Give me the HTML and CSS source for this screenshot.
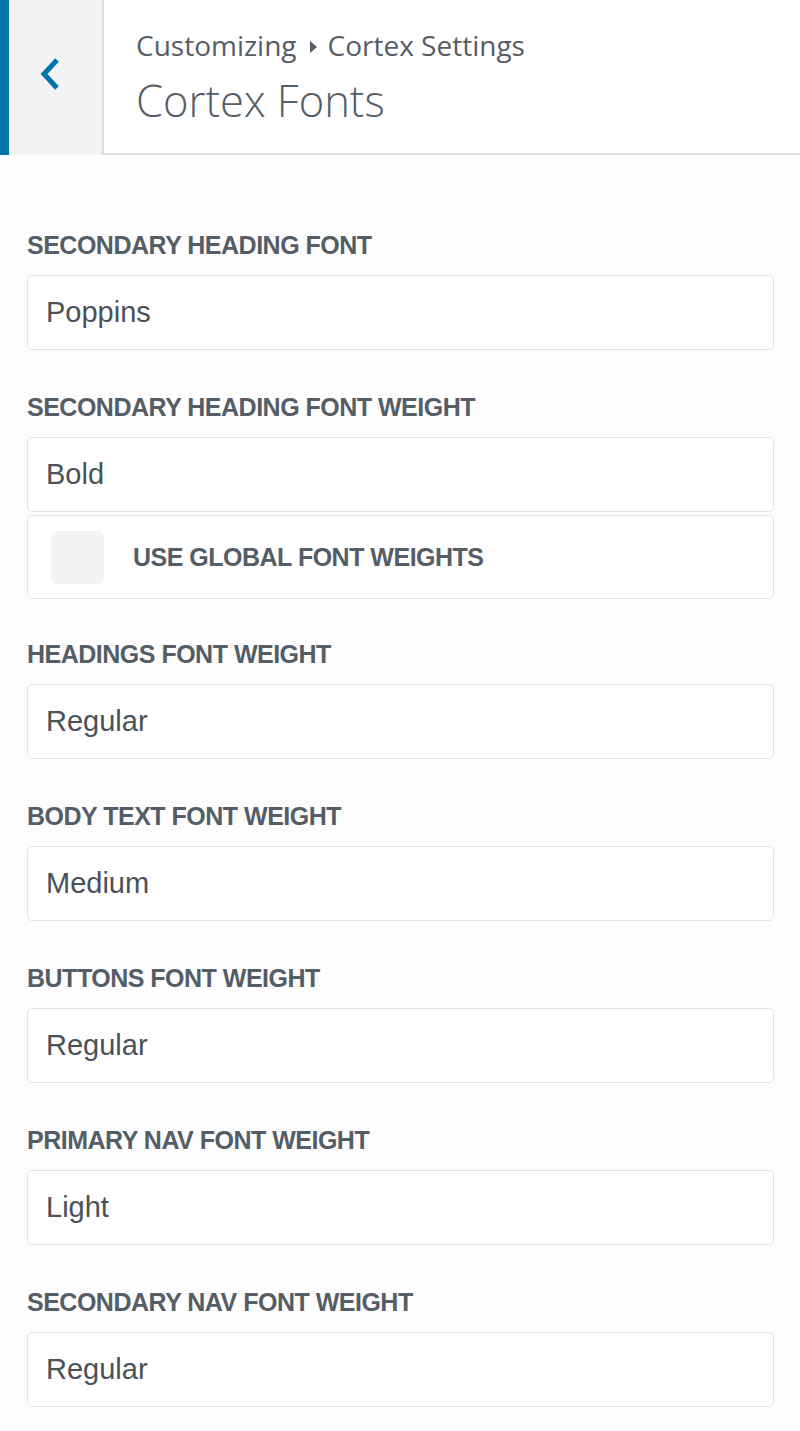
FILE: index.html
```html
<!DOCTYPE html>
<html lang="en">

<head>
    <meta charset="UTF-8">
    <meta name="viewport" content="width=device-width, initial-scale=1.0">
    <title>Cortex Fonts</title>
    <link rel="stylesheet" href="styles.css">
</head>

<body>
    <!-- Panel header with back button and breadcrumb -->
    <div class="panel-header">
        <div class="back-button">
            <svg width="22" height="32" viewBox="0 0 22 32">
                <polyline points="17,2 4,16 17,30" fill="none" stroke="#0073aa" stroke-width="5" />
            </svg>
        </div>
        <div class="panel-title">
            <div class="crumb">Customizing<span class="crumb-arrow"></span>Cortex Settings</div>
            <div class="title">Cortex Fonts</div>
        </div>
    </div>

    <div class="controls">
        <div class="control">
            <div class="label">Secondary Heading Font</div>
            <div class="select">Poppins</div>
        </div>

        <div class="control with-check">
            <div class="label">Secondary Heading Font Weight</div>
            <div class="select">Bold</div>
            <div class="checkbox-row">
                <span class="checkbox"></span>
                <span class="check-label">Use Global Font Weights</span>
            </div>
        </div>

        <div class="control">
            <div class="label">Headings Font Weight</div>
            <div class="select">Regular</div>
        </div>

        <div class="control">
            <div class="label">Body Text Font Weight</div>
            <div class="select">Medium</div>
        </div>

        <div class="control">
            <div class="label">Buttons Font Weight</div>
            <div class="select">Regular</div>
        </div>

        <div class="control">
            <div class="label">Primary Nav Font Weight</div>
            <div class="select">Light</div>
        </div>

        <div class="control">
            <div class="label">Secondary Nav Font Weight</div>
            <div class="select">Regular</div>
        </div>
    </div>
</body>

</html>
```

FILE: styles.css
```css
/* Reset */
* {
    margin: 0;
    padding: 0;
    box-sizing: border-box;
}

body {
    background-color: #fdfdfd;
    color: #555d66;
    font-family: "Liberation Sans", Arial, sans-serif;
}

/* Header */
.panel-header {
    display: flex;
    height: 155px;
}

.back-button {
    width: 104px;
    background-color: #f3f3f5;
    border-left: 9px solid #0073aa;
    border-right: 2px solid #dcdcde;
    padding: 58px 0 0 31px;
}

.panel-title {
    flex: 1;
    background-color: #fff;
    border-bottom: 2px solid #dcdcde;
    padding: 27px 0 0 32px;
    font-family: "Open Sans", sans-serif;
}

.crumb {
    font-size: 28px;
    line-height: 36px;
    color: #555d66;
}

.crumb-arrow {
    display: inline-block;
    width: 0;
    height: 0;
    border-left: 7px solid #555d66;
    border-top: 6px solid transparent;
    border-bottom: 6px solid transparent;
    margin: 0 11px 0 13px;
    vertical-align: 3px;
}

.title {
    margin-top: 13px;
    font-size: 43.5px;
    font-weight: 300;
    line-height: 50px;
    color: #555d66;
}

/* Controls list */
.controls {
    padding: 75px 26px 0 27px;
}

.control {
    margin-bottom: 42px;
}

.control.with-check {
    margin-bottom: 40px;
}

.label {
    font-size: 25px;
    font-weight: bold;
    letter-spacing: -0.5px;
    line-height: 30px;
    text-transform: uppercase;
    margin-bottom: 15px;
}

.select {
    display: flex;
    align-items: center;
    height: 75px;
    padding-left: 18px;
    background-color: #fff;
    border: 1px solid #e4e4e6;
    border-radius: 5px;
    font-size: 29px;
    color: #4a5159;
}

.checkbox-row {
    display: flex;
    align-items: center;
    gap: 29px;
    height: 84px;
    margin-top: 3px;
    padding-left: 23px;
    background-color: #fff;
    border: 1px solid #e4e4e6;
    border-radius: 5px;
}

.checkbox {
    width: 53px;
    height: 53px;
    background-color: #f3f3f5;
    border-radius: 7px;
}

.check-label {
    font-size: 25px;
    font-weight: bold;
    letter-spacing: -0.5px;
    text-transform: uppercase;
}
```
